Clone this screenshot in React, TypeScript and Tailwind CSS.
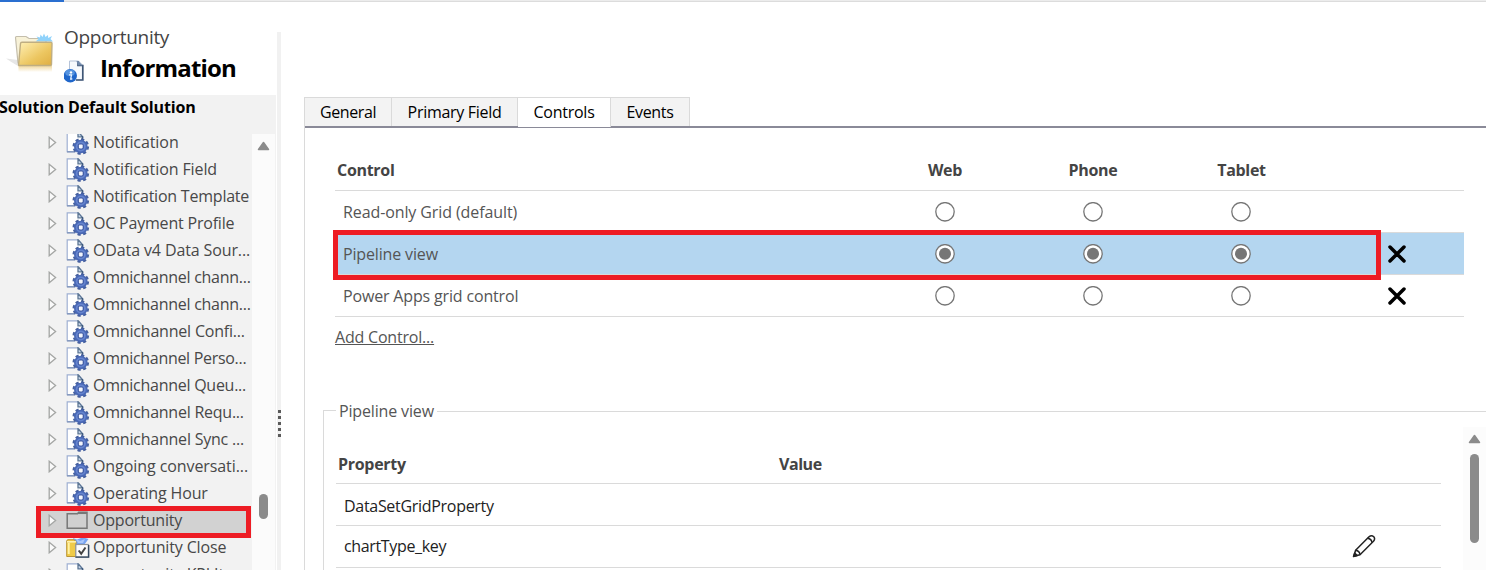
import React from "react";

function TopBar() {
  return (
    <div className="flex h-[3px] shrink-0">
      <div className="h-[2px] w-[64px] bg-[#2a6fd0]" />
      <div className="h-[2px] flex-1 border-b border-[#dcdcdc] bg-[#ececec]" />
    </div>
  );
}

function FolderIcon() {
  return (
    <svg width="50" height="44" viewBox="0 0 50 44">
      <defs>
        <linearGradient id="folderFront" x1="0" y1="0" x2="1" y2="1">
          <stop offset="0" stopColor="#fff0b5" />
          <stop offset="0.6" stopColor="#ecc660" />
          <stop offset="1" stopColor="#dfae42" />
        </linearGradient>
        <linearGradient id="folderFade" x1="0" y1="0" x2="0" y2="1">
          <stop offset="0" stopColor="#f0d79a" />
          <stop offset="1" stopColor="#ffffff" />
        </linearGradient>
      </defs>
      <path d="M0 29.500L12 31V37Q5 33 0 29.500Z" fill="#e6e6e6" />
      <path d="M9.500 8.500Q9.500 7.500 10.500 7.500H20L23 9.500H40V34H12Z" fill="#f8f2d8" stroke="#c4beac" strokeWidth="1.200" />
      <path
        d="M38 4.500L39.500 8L42 6L42.200 9L46 7L44.500 10L47 12.500H29.500L32.500 10L30.500 7.500L34 8.500L34.500 5.500L36.500 8Z"
        fill="#8fd2fb"
      />
      <path d="M12.500 36.500H46L46 43H12.500Z" fill="url(#folderFade)" />
      <path
        d="M14.500 14.500Q14.600 13.300 16 13.300H45Q46 13.300 46 14.500L45.500 35.500Q45.400 36.500 44.500 36.500H13.300Q12.500 36.500 12.600 35.500Z"
        fill="url(#folderFront)"
        stroke="#bfae82"
        strokeWidth="1.400"
      />
    </svg>
  );
}

function InfoPageIcon() {
  return (
    <svg width="20" height="23" viewBox="0 0 20 23">
      <path d="M5.500 1H14.500L18.500 5V20H5.500Z" fill="#f6f9fd" stroke="#b5c3d8" />
      <path d="M14 1V5.500H18.800V20H12" fill="none" stroke="#3f5676" strokeWidth="1.700" />
      <path d="M12.500 1H14.500L18.500 5.500H14Z" fill="#7088aa" />
      <circle cx="6.300" cy="15.800" r="6.700" fill="#1f66ca" />
      <ellipse cx="6" cy="12.700" rx="4.800" ry="3.200" fill="#6ba5e8" opacity="0.700" />
      <circle cx="7" cy="12.400" r="1.200" fill="#fff" />
      <path d="M5 14.900H7.500L6.700 19H8.300" fill="none" stroke="#e8f3ff" strokeWidth="1.300" />
    </svg>
  );
}

function Expander() {
  return (
    <svg width="9" height="13" viewBox="0 0 9 13" className="shrink-0">
      <path d="M1.200 1.200L7.600 6.500L1.200 11.800Z" fill="#fafafa" stroke="#a4a6a4" strokeWidth="1.300" />
    </svg>
  );
}

function EntityIcon() {
  return (
    <svg width="24" height="24" viewBox="0 0 24 24" className="shrink-0">
      <path d="M1.200 0.800H12L16.500 5.500V20.700H1.200Z" fill="#ffffff" stroke="#9fb0d2" strokeWidth="1.200" />
      <path d="M1 20.900H9" stroke="#7c91b8" strokeWidth="1.200" />
      <path d="M12 0.800V5.800H16.500L12.500 1Z" fill="#c9d7ea" stroke="#5c7694" strokeWidth="1.300" />
      <path d="M16.500 5V9" stroke="#3f5b7e" strokeWidth="1.300" />
      <circle cx="14.800" cy="15.500" r="7.100" fill="none" stroke="#46609f" strokeWidth="2.400" strokeDasharray="3.200 2.376" />
      <circle cx="14.800" cy="15.500" r="6.800" fill="#4a69b6" />
      <circle cx="14.800" cy="15.500" r="5" fill="#6685cf" />
      <circle cx="14.800" cy="15.500" r="3.200" fill="#405ba4" />
      <rect x="12.900" y="13.600" width="3.800" height="3.800" rx="0.800" fill="#f1f4fb" />
    </svg>
  );
}

function PlainFolderIcon() {
  return (
    <svg width="24" height="24" viewBox="0 0 24 24" className="shrink-0">
      <path d="M1.200 4.700H11.500L12.700 3.200H21V19.300H1.200Z" fill="#d0d0d0" stroke="#777777" strokeWidth="1.500" />
      <path d="M12 4.200H21" stroke="#777777" strokeWidth="1.700" />
    </svg>
  );
}

function ActivityIcon() {
  return (
    <svg width="24" height="24" viewBox="0 0 24 24" className="shrink-0">
      <path d="M7 2L11 3.500L15 2H19L22.500 3L18 9H11L8 5Z" fill="#78a4f2" />
      <path d="M10 3L14 5L19 3L17 7H12Z" fill="#a9c7fb" />
      <path d="M0.700 5Q0.700 4 2 3.700H8L10 5.500V20.500H0.700Z" fill="#f0cb48" stroke="#b99435" />
      <path d="M1 5.800H10" stroke="#fff2b0" strokeWidth="1.600" />
      <path d="M2.700 7V18" stroke="#fff2a6" strokeWidth="2" />
      <rect x="9.800" y="8.500" width="12.500" height="12.500" fill="#fcfcfc" stroke="#8e939b" strokeWidth="1.200" />
      <path d="M9.500 21.200H22.700V9" fill="none" stroke="#31465f" strokeWidth="1.300" />
      <path d="M12.700 14.500L15.200 17.700L19.500 11.500" fill="none" stroke="#444444" strokeWidth="2" />
    </svg>
  );
}

function ScrollArrow() {
  return (
    <svg width="13" height="10" viewBox="0 0 13 10">
      <path d="M6.500 1.500L11.500 8.500H1.500Z" fill="#8b8b8b" stroke="#8b8b8b" strokeWidth="1.500" strokeLinejoin="round" />
    </svg>
  );
}

type Kind = "entity" | "folder" | "activity";
type Item = { label: string; kind: Kind; text: string };

const items: Item[] = [
  { label: "Notification", kind: "entity", text: "tracking-[-0.08px]" },
  { label: "Notification Field", kind: "entity", text: "tracking-[-0.1px]" },
  { label: "Notification Template", kind: "entity", text: "tracking-[-0.22px]" },
  { label: "OC Payment Profile", kind: "entity", text: "tracking-[-0.2px]" },
  { label: "OData v4 Data Sour...", kind: "entity", text: "tracking-[-0.12px]" },
  { label: "Omnichannel chann...", kind: "entity", text: "tracking-[-0.26px]" },
  { label: "Omnichannel chann...", kind: "entity", text: "tracking-[-0.26px]" },
  { label: "Omnichannel Confi...", kind: "entity", text: "tracking-[-0.2px]" },
  { label: "Omnichannel Perso...", kind: "entity", text: "tracking-[-0.3px]" },
  { label: "Omnichannel Queu...", kind: "entity", text: "tracking-[-0.26px]" },
  { label: "Omnichannel Requ...", kind: "entity", text: "tracking-[-0.24px]" },
  { label: "Omnichannel Sync ...", kind: "entity", text: "tracking-[-0.22px]" },
  { label: "Ongoing conversati...", kind: "entity", text: "tracking-[-0.08px]" },
  { label: "Operating Hour", kind: "entity", text: "tracking-[-0.15px]" },
  { label: "Opportunity", kind: "folder", text: "tracking-[-0.2px]" },
  { label: "Opportunity Close", kind: "activity", text: "tracking-[-0.15px]" },
  { label: "Opportunity KPI It...", kind: "entity", text: "tracking-[-0.15px]" },
];

function TreeRow({ item }: { item: Item }) {
  const selected = item.kind === "folder";
  return (
    <div className="relative flex h-[27px] shrink-0 items-center pl-[48px]">
      {selected && <div className="absolute top-[-1px] left-[36px] h-[32px] w-[215px] border-[5px] border-[#ed1c24] bg-[#d2d2d2]" />}
      <div className="relative flex items-center">
        <Expander />
        <div className="ml-[9px] flex">
          {item.kind === "entity" && <EntityIcon />}
          {item.kind === "folder" && <PlainFolderIcon />}
          {item.kind === "activity" && <ActivityIcon />}
        </div>
        <span className={`ml-[3px] text-[16px] leading-[27px] whitespace-nowrap text-[#484848] ${item.text}`}>{item.label}</span>
      </div>
    </div>
  );
}

function Sidebar() {
  return (
    <aside className="flex w-[276px] shrink-0 flex-col">
      <header className="flex h-[92px] shrink-0 pt-[22px]">
        <div className="w-[64px] shrink-0 pt-[4px] pl-[6px]">
          <FolderIcon />
        </div>
        <div>
          <div className="text-[19px] leading-[24px] tracking-[-0.3px] text-[#444444]">Opportunity</div>
          <div className="flex h-[38px] items-center">
            <div className="pt-[6px]">
              <InfoPageIcon />
            </div>
            <div className="ml-[16px] text-[24px] leading-[32px] font-bold tracking-[-0.85px] text-black">Information</div>
          </div>
        </div>
      </header>
      <div className="flex min-h-0 flex-1 flex-col bg-[#f2f2f2]">
        <div className="ml-[-1px] h-[39px] shrink-0 text-[16px] leading-[24px] font-bold tracking-[-0.16px] whitespace-nowrap text-black">
          Solution Default Solution
        </div>
        <div className="flex min-h-0 flex-1 overflow-hidden">
          <div className="flex w-[252px] flex-col overflow-hidden">
            <div className="mt-[-5px] flex flex-col">
              {items.map((item, i) => (
                <TreeRow key={i} item={item} />
              ))}
            </div>
          </div>
          <div className="flex w-[23px] flex-col items-center bg-[#fbfbfb] pt-[7px]">
            <ScrollArrow />
            <div className="mt-[343px] h-[25px] w-[9px] rounded-full bg-[#8b8b8b]" />
          </div>
        </div>
      </div>
    </aside>
  );
}

function Splitter() {
  return (
    <div className="mt-[29px] ml-[1px] flex w-[4px] shrink-0 flex-col gap-[3px] bg-[#f1f1f1] pt-[378px]">
      {[0, 1, 2, 3, 4].map((n) => (
        <div key={n} className="ml-[1px] h-[3px] w-[3px] shrink-0 bg-[#5a5a5a]" />
      ))}
    </div>
  );
}

function Tabs() {
  const base = "h-[29px] border-t border-r border-[#dadada] text-center text-[16px] leading-[28px] text-black";
  return (
    <div className="flex h-[31px] border-b-2 border-[#8a8a98]">
      <div className={`${base} w-[87px] bg-[#f3f3f3] tracking-[-0.4px]`}>General</div>
      <div className={`${base} w-[126px] bg-[#f3f3f3] tracking-[-0.3px]`}>Primary Field</div>
      <div className="relative z-10 h-[30px] w-[93px] border-t border-r border-[#dadada] bg-white text-center text-[16px] leading-[28px] tracking-[-0.25px] text-black">
        Controls
      </div>
      <div className={`${base} w-[79px] bg-[#f3f3f3] tracking-[-0.3px]`}>Events</div>
    </div>
  );
}

function Radio({ checked }: { checked: boolean }) {
  return (
    <div className="flex w-[148px] justify-center">
      <svg width="20" height="20" viewBox="0 0 20 20">
        <circle cx="10" cy="9.800" r="9.200" fill="#fff" stroke="#767676" strokeWidth="1.300" />
        {checked && <circle cx="10" cy="9.800" r="6" fill="#767676" />}
      </svg>
    </div>
  );
}

function Cross() {
  return (
    <svg width="18" height="18" viewBox="0 0 18 18">
      <path d="M2 2L16 16M16 2L2 16" stroke="#000" strokeWidth="3.500" strokeLinecap="round" />
    </svg>
  );
}

function ControlRow({ name, text, checked, removable }: { name: string; text: string; checked: boolean; removable: boolean }) {
  return (
    <div className={`relative flex h-[42px] items-center border-b border-[#dadada] ${checked ? "bg-[#b4d6f0]" : ""}`}>
      <div className={`w-[536px] pl-[8px] text-[16px] text-[#555555] ${text}`}>{name}</div>
      <Radio checked={checked} />
      <Radio checked={checked} />
      <Radio checked={checked} />
      <div className="pl-[73px]">{removable && <Cross />}</div>
      {checked && <div className="absolute top-[-3px] left-[-2px] z-10 h-[50px] w-[1048px] border-[5px] border-[#ed1c24]" />}
    </div>
  );
}

function ControlTable() {
  return (
    <div className="ml-[30px] w-[1129px]">
      <div className="flex h-[42px] items-center border-b border-[#dadada] text-[16px] font-bold tracking-[-0.3px] text-[#444444]">
        <div className="w-[536px] pl-[2px]">Control</div>
        <div className="w-[148px] text-center">Web</div>
        <div className="w-[148px] text-center">Phone</div>
        <div className="w-[148px] pl-px text-center">Tablet</div>
      </div>
      <ControlRow name="Read-only Grid (default)" text="tracking-[-0.1px]" checked={false} removable={false} />
      <ControlRow name="Pipeline view" text="tracking-[-0.15px]" checked removable />
      <ControlRow name="Power Apps grid control" text="tracking-[-0.16px]" checked={false} removable />
      <div className="pt-[8px] text-[16px] leading-[24px] tracking-[-0.2px] text-[#555555]">
        <span className="underline">Add Control...</span>
      </div>
    </div>
  );
}

function Pencil() {
  return (
    <svg width="24" height="24" viewBox="0 0 24 24" fill="none" stroke="#222222" strokeWidth="1.500" strokeLinejoin="round">
      <path d="M1.800 22.200L3.600 16.200L17 2.800Q19.500 0.800 21.800 2.800Q23.500 5 21.500 7.300L8 20.700Z" />
      <path d="M3.600 16.200Q7.500 16.700 8 20.700M15.500 4.300Q19.600 4.800 20 8.800" />
      <path d="M1.500 22.500L2.700 19L5.200 21.500Z" fill="#222222" />
    </svg>
  );
}

function PropertyPanel() {
  return (
    <section className="mt-[49px] ml-[18px] flex flex-1 flex-col">
      <div className="flex h-[26px] items-center">
        <div className="mt-[12px] h-[14px] w-[13px] shrink-0 border-t border-l border-[#dadada]" />
        <div className="w-[101px] shrink-0 pl-[3px] text-[16px] tracking-[-0.15px] whitespace-nowrap text-[#555555]">Pipeline view</div>
        <div className="h-px flex-1 bg-[#dadada]" />
      </div>
      <div className="flex flex-1 border-l border-[#dadada] pl-[12px]">
        <div className="w-[1105px] shrink-0 pt-[18px]">
          <div className="flex h-[42px] items-center border-b border-[#dadada] pt-[2px] text-[16px] font-bold tracking-[-0.3px] text-[#444444]">
            <div className="w-[441px] pl-[2px]">Property</div>
            <div className="pl-[2px] tracking-[-0.45px]">Value</div>
          </div>
          <div className="flex h-[42px] items-center border-b border-[#dadada] pt-[2px] pl-[8px] text-[16px] tracking-[-0.3px] text-[#222222]">
            DataSetGridProperty
          </div>
          <div className="flex h-[42px] items-center justify-between border-b border-[#dadada] pr-[65px] pb-[2px] pl-[8px] text-[16px] tracking-[-0.35px] text-[#222222]">
            chartType_key
            <Pencil />
          </div>
        </div>
        <div className="mt-[3px] ml-[22px] flex w-[23px] flex-col items-center bg-[#fcfcfc] pt-[7px]">
          <ScrollArrow />
          <div className="mt-[10px] h-[89px] w-[9px] rounded-full bg-[#8b8b8b]" />
        </div>
      </div>
    </section>
  );
}

export default function App() {
  return (
    <div className="flex h-[570px] w-[1486px] flex-col overflow-hidden bg-white font-['Open_Sans','Noto_Sans',sans-serif]">
      <TopBar />
      <div className="flex min-h-0 flex-1">
        <Sidebar />
        <Splitter />
        <main className="mt-[94px] ml-[23px] flex min-w-0 flex-1 flex-col border-l border-[#dadada]">
          <Tabs />
          <div className="flex flex-1 flex-col pt-[21px]">
            <ControlTable />
            <PropertyPanel />
          </div>
        </main>
      </div>
    </div>
  );
}
